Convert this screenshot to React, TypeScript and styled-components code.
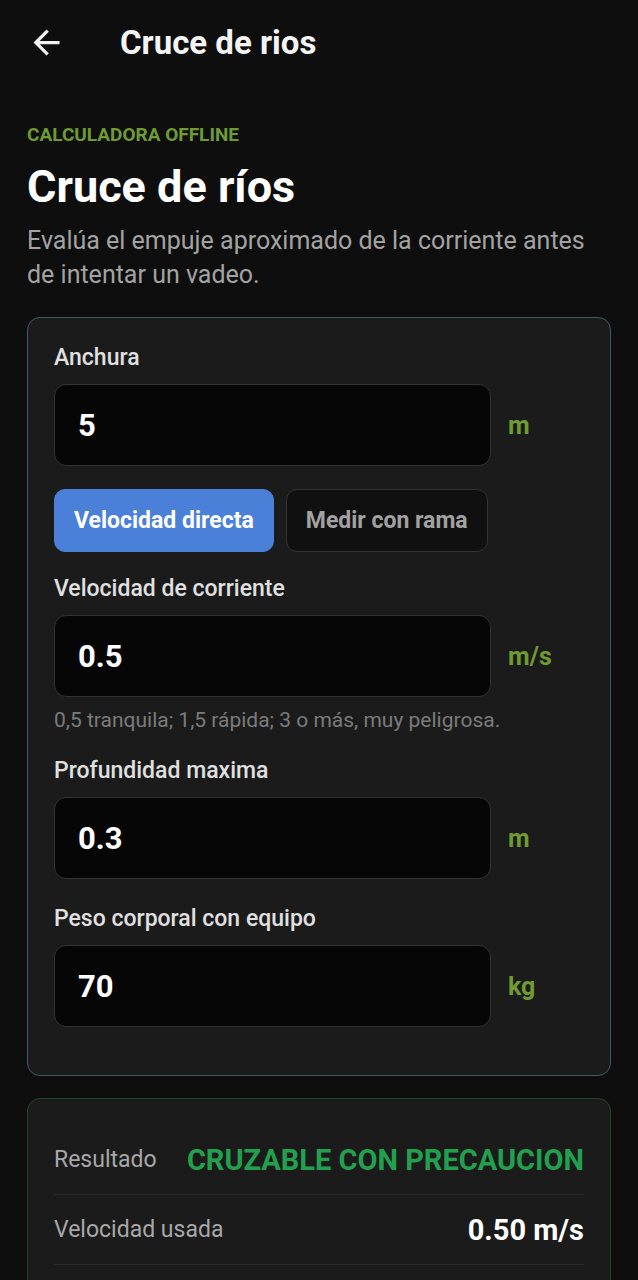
import styled, { createGlobalStyle } from "styled-components";

const GlobalStyle = createGlobalStyle`
  html, body {
    margin: 0;
    padding: 0;
    background: #0e0e0f;
  }
  body {
    font-family: Roboto, "Noto Sans", sans-serif;
    color: #fff;
  }
  * { box-sizing: border-box; }
`

const Screen = styled.div`
  width: 638px;
  min-height: 1280px;
  background: #0e0e0f;
  overflow: hidden;
`

const TopBar = styled.header`
  height: 84px;
  display: flex;
  align-items: center;
  padding: 0 27px;
`

const BackButton = styled.button`
  width: 39px;
  height: 39px;
  padding: 0;
  border: none;
  background: none;
  color: #f2f2f2;
  display: flex;
  margin-right: 54px;
`

const TopTitle = styled.h2`
  margin: 0;
  font-size: 33px;
  font-weight: 700;
  color: #f4f4f4;
`

const Content = styled.main`
  padding: 40px 27px 0;
`

const Eyebrow = styled.div`
  font-size: 19px;
  line-height: 22px;
  font-weight: 700;
  color: #6f9b32;
`

const Heading = styled.h1`
  margin: 15px 0 0;
  font-size: 45px;
  line-height: 52px;
  font-weight: 700;
  color: #fff;
`

const Lead = styled.p`
  margin: 11px 0 0;
  font-size: 25px;
  line-height: 34px;
  color: #a3a3a3;
`

const Card = styled.section<{ tone: "teal" | "green" }>`
  margin-top: 25px;
  background: #1b1b1b;
  border: 1px solid ${p => (p.tone === "teal" ? "#3c5c66" : "#21462b")};
  border-radius: 13px;
  padding: ${p => (p.tone === "teal" ? "28px 26px 48px" : "26px 26px 0")};
  & + & {
    margin-top: 22px;
  }
`

const Field = styled.div`
  & + & {
    margin-top: 28px;
  }
`

const Label = styled.label`
  display: block;
  font-size: 23px;
  line-height: 24px;
  font-weight: 500;
  color: #e0e0e0;
  margin-bottom: 14px;
`

const InputRow = styled.div`
  display: flex;
  align-items: center;
  gap: 17px;
`

const ValueInput = styled.input`
  flex: 1;
  min-width: 0;
  height: 82px;
  background: #060606;
  border: 1px solid #333;
  border-radius: 12px;
  padding: 0 23px;
  font-family: Roboto, "Noto Sans", sans-serif;
  font-size: 31px;
  font-weight: 700;
  color: #fff;
  outline: none;
`

const Unit = styled.span`
  width: 76px;
  font-size: 25px;
  font-weight: 700;
  color: #6f9b32;
`

const Hint = styled.div`
  margin-top: 12px;
  font-size: 21px;
  line-height: 22px;
  color: #7b7b7b;
`

const ModeRow = styled.div`
  display: flex;
  gap: 12px;
  margin: 23px 0 25px;
`

const ModeButton = styled.button<{ active?: boolean }>`
  height: 63px;
  padding: 0 19px;
  border-radius: 11px;
  font-family: Roboto, "Noto Sans", sans-serif;
  font-size: 23px;
  font-weight: 700;
  border: 1px solid ${p => (p.active ? "#4a80d8" : "#343434")};
  background: ${p => (p.active ? "#4a80d8" : "#101010")};
  color: ${p => (p.active ? "#fff" : "#a2a2a2")};
`

const ResultRow = styled.div`
  height: 70px;
  display: flex;
  align-items: center;
  justify-content: space-between;
  border-bottom: 1px solid #2b2b2b;
`

const ResultKey = styled.span`
  font-size: 23px;
  color: #a8a8a8;
`

const ResultValue = styled.span<{ status?: boolean }>`
  font-size: ${p => (p.status ? "29px" : "29px")};
  font-weight: 700;
  color: ${p => (p.status ? "#22a04e" : "#fff")};
`

function ArrowBack() {
  return (
    <svg width="39" height="39" viewBox="0 0 24 24" fill="currentColor">
      <path d="M20 11H7.83l5.59-5.59L12 4l-8 8 8 8 1.41-1.41L7.83 13H20v-2z" />
    </svg>
  )
}

const fields = [
  { label: "Velocidad de corriente", value: "0.5", unit: "m/s", hint: "0,5 tranquila; 1,5 rápida; 3 o más, muy peligrosa." },
  { label: "Profundidad maxima", value: "0.3", unit: "m" },
  { label: "Peso corporal con equipo", value: "70", unit: "kg" },
]

export default function App() {
  return (
    <Screen>
      <GlobalStyle />
      <TopBar>
        <BackButton aria-label="Volver"><ArrowBack /></BackButton>
        <TopTitle>Cruce de rios</TopTitle>
      </TopBar>
      <Content>
        <Eyebrow>CALCULADORA OFFLINE</Eyebrow>
        <Heading>Cruce de ríos</Heading>
        <Lead>Evalúa el empuje aproximado de la corriente antes de intentar un vadeo.</Lead>

        <Card tone="teal">
          <Field>
            <Label>Anchura</Label>
            <InputRow>
              <ValueInput defaultValue="5" />
              <Unit>m</Unit>
            </InputRow>
          </Field>
          <ModeRow>
            <ModeButton active>Velocidad directa</ModeButton>
            <ModeButton>Medir con rama</ModeButton>
          </ModeRow>
          {fields.map(f => (
            <Field key={f.label}>
              <Label>{f.label}</Label>
              <InputRow>
                <ValueInput defaultValue={f.value} />
                <Unit>{f.unit}</Unit>
              </InputRow>
              {f.hint && <Hint>{f.hint}</Hint>}
            </Field>
          ))}
        </Card>

        <Card tone="green">
          <ResultRow>
            <ResultKey>Resultado</ResultKey>
            <ResultValue status>CRUZABLE CON PRECAUCION</ResultValue>
          </ResultRow>
          <ResultRow>
            <ResultKey>Velocidad usada</ResultKey>
            <ResultValue>0.50 m/s</ResultValue>
          </ResultRow>
          <ResultRow />
        </Card>
      </Content>
    </Screen>
  )
}
